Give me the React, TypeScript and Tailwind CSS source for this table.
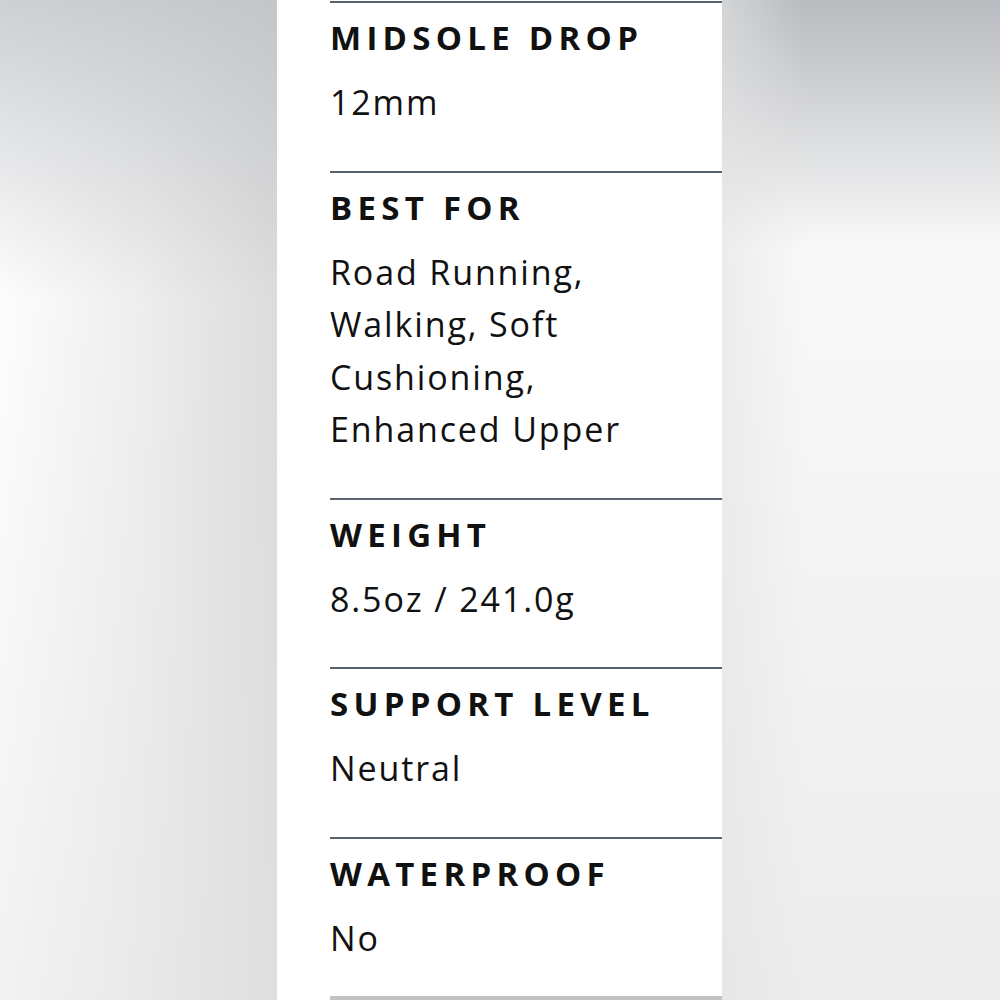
const specs = [
  { label: "MIDSOLE DROP", value: ["12mm"] },
  {
    label: "BEST FOR",
    value: ["Road Running,", "Walking, Soft", "Cushioning,", "Enhanced Upper"],
  },
  { label: "WEIGHT", value: ["8.5oz / 241.0g"] },
  { label: "SUPPORT LEVEL", value: ["Neutral"] },
  { label: "WATERPROOF", value: ["No"] },
];

function SpecRow({
  label,
  value,
  last,
}: {
  label: string;
  value: string[];
  last?: boolean;
}) {
  return (
    <div
      className={
        "border-t-2 border-[#5a6170] pt-[15px] " +
        (last ? "pb-[32px]" : "pb-[42px]")
      }
    >
      <div className="h-[40px] text-[33px] leading-[40px] font-bold tracking-[0.16em] text-[#111]">
        {label}
      </div>
      <div className="mt-[18px] text-[34px] leading-[52.5px] tracking-[0.055em] text-[#111]">
        {value.map((line) => (
          <div key={line}>{line}</div>
        ))}
      </div>
    </div>
  );
}

export default function App() {
  return (
    <div
      className="flex h-[1000px] w-[1000px] overflow-hidden"
      style={{ fontFamily: "'Open Sans', Lato, sans-serif" }}
    >
      {/* blurred background, left */}
      <div className="w-[277px] bg-linear-to-r from-[#fdfdfd] via-[#eeeeee] to-[#dcdcdc]">
        <div className="h-full w-full bg-linear-to-b from-[#b9bcc0]/70 via-[#ffffff]/0 via-30% to-[#e2e2e2]/40" />
      </div>

      {/* spec panel */}
      <div className="flex w-[445px] flex-col bg-white pt-px pl-[53px]">
        {specs.map((s, i) => (
          <SpecRow
            key={s.label}
            label={s.label}
            value={s.value}
            last={i === specs.length - 1}
          />
        ))}
        <div className="h-[5px] bg-[#c2c2c2]" />
      </div>

      {/* blurred background, right */}
      <div className="flex-1 bg-linear-to-b from-[#b8bbbf] via-[#f9f9f9] via-25% to-[#ececec]">
        <div className="h-full w-full bg-linear-to-r from-[#e4e4e4]/60 via-transparent via-30% to-transparent" />
      </div>
    </div>
  );
}
